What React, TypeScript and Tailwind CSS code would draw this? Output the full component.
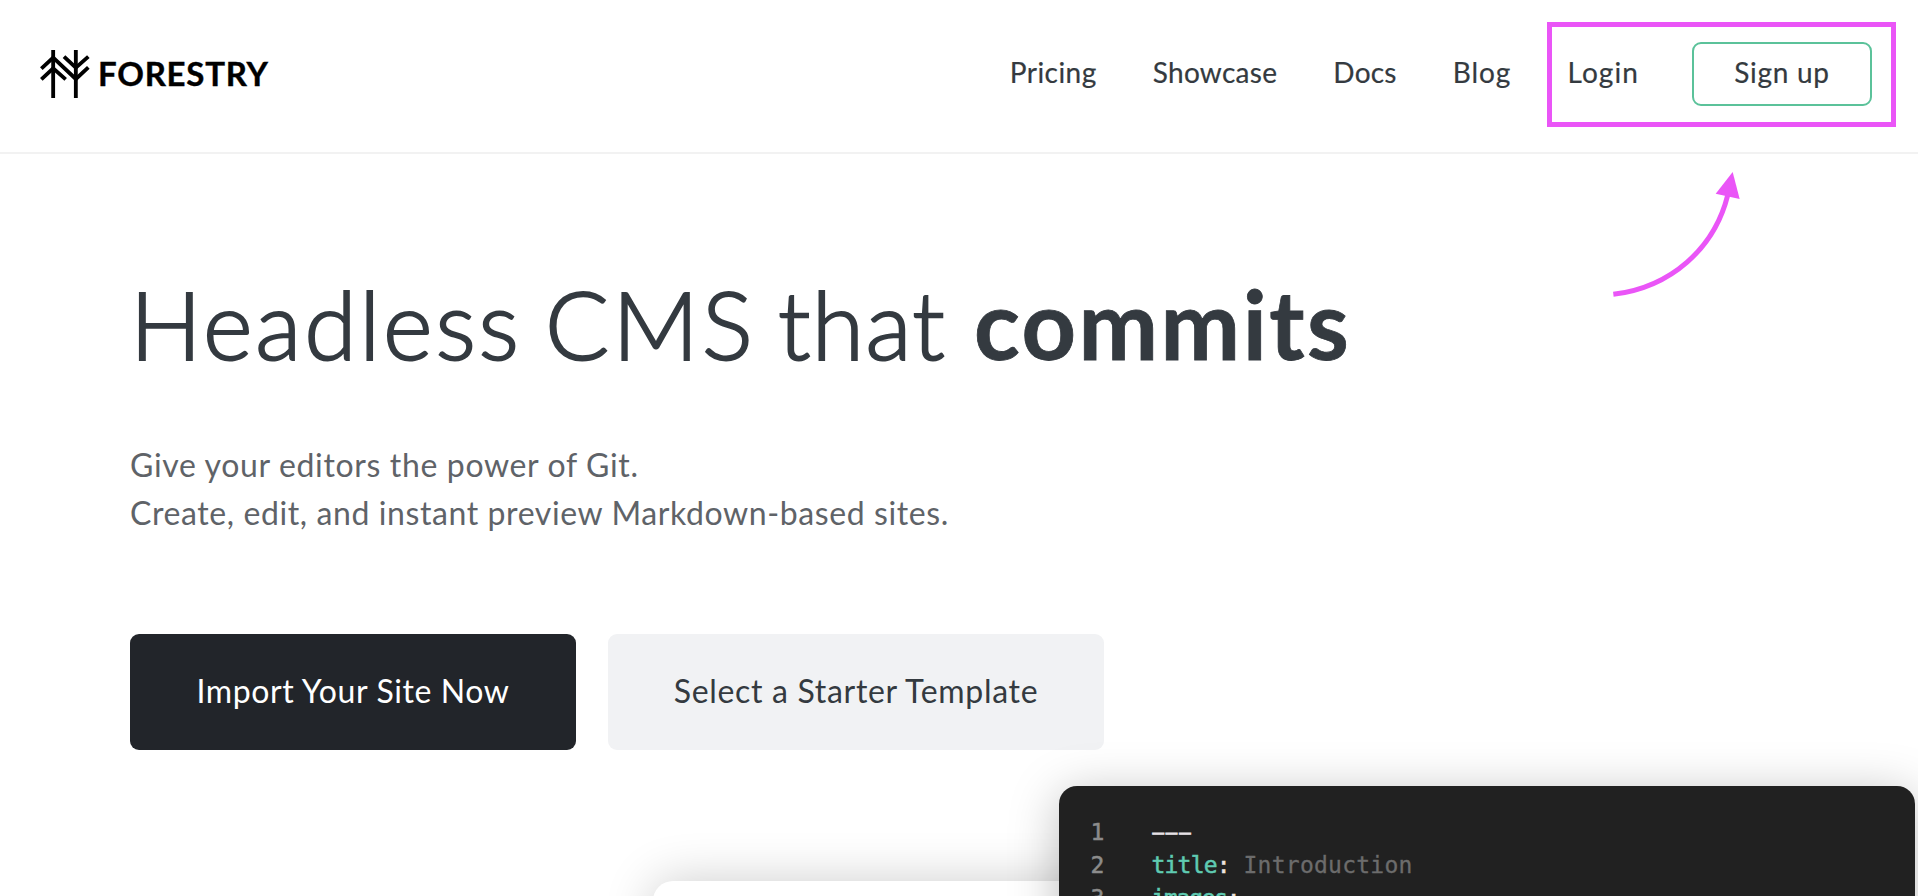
import React from "react";

const PINK = "#ea55f7";

function TreesMark() {
  return (
    <svg viewBox="60 60 150 144" className="h-12 w-[50px] shrink-0" fill="none" stroke="#000" strokeWidth="11.5">
      <path d="M99.5 60V204M167.5 60V204" />
      <path d="M64 116L99.5 83L167.5 147L205 112" />
      <path d="M64 148L99.5 115L137 148" />
      <path d="M132 80L167.5 113L205 80" />
    </svg>
  );
}

function Header() {
  return (
    <header className="flex h-[154px] items-start justify-between border-b-2 border-[#f2f2f2] pr-[46px] pl-10">
      <a className="flex items-start gap-2 pt-[50px]">
        <TreesMark />
        <span className="pt-[5px] text-[33px] leading-9 font-bold tracking-[0.75px] text-black [-webkit-text-stroke:0.4px_#000]">
          FORESTRY
        </span>
      </a>
      <nav className="flex items-start gap-14 pt-[42px] text-[28px] leading-9 text-[#343a40]">
        <a className="pt-3 tracking-[0.45px] [-webkit-text-stroke:0.2px_#343a40]">Pricing</a>
        <a className="pt-3 tracking-[0.3px] [-webkit-text-stroke:0.2px_#343a40]">Showcase</a>
        <a className="pt-3 tracking-[0.2px] [-webkit-text-stroke:0.2px_#343a40]">Docs</a>
        <a className="pt-3 tracking-[1px] [-webkit-text-stroke:0.2px_#343a40]">Blog</a>
        <a className="-mr-[3px] pt-3 tracking-[1.1px] [-webkit-text-stroke:0.2px_#343a40]">Login</a>
        <a className="h-16 w-[180px] rounded-[9px] border-2 border-[#5bc29a] pt-2.5 text-center tracking-[0.7px] [-webkit-text-stroke:0.2px_#343a40]">
          Sign up
        </a>
      </nav>
    </header>
  );
}

function Hero() {
  return (
    <section className="pt-[121px] pl-[130px]">
      <h1 className="flex text-[95px] leading-24 font-light whitespace-nowrap text-[#343a40]">
        <span className="w-[415px] tracking-[2.8px] [-webkit-text-stroke:2px_#343a40]">Headless</span>
        <span className="w-[233px] tracking-[3.2px] [-webkit-text-stroke:2px_#343a40]">CMS</span>
        <span className="w-[196px] tracking-[1.3px] [-webkit-text-stroke:2px_#343a40]">that</span>
        <b className="font-bold tracking-[2.5px] [-webkit-text-stroke:0.8px_#343a40]">commits</b>
      </h1>
      <p className="mt-[70px] text-[32px] leading-12 text-[#5f6368]">
        <span className="tracking-[0.65px]">Give your editors the power of Git.</span>
        <br />
        <span className="tracking-[0.6px]">Create, edit, and instant preview Markdown-based sites.</span>
      </p>
      <div className="mt-[97px] flex gap-8 text-[32px]">
        <a className="flex h-[116px] w-[446px] items-center justify-center rounded-[9px] bg-[#22252a] pb-0.5 tracking-[0.6px] text-white">
          Import Your Site Now
        </a>
        <a className="flex h-[116px] w-[496px] items-center justify-center rounded-[9px] bg-[#f1f2f4] pb-0.5 tracking-[0.68px] text-[#343a40]">
          Select a Starter Template
        </a>
      </div>
    </section>
  );
}

function CodeLine({ n, children }: { n: number; children: React.ReactNode }) {
  return (
    <div className="flex h-[33px] whitespace-pre">
      <span className="w-[61px] text-[#8c8c8c] [-webkit-text-stroke:0.5px_#8c8c8c]">{n}</span>
      {children}
    </div>
  );
}

function Preview() {
  return (
    <section className="grid h-[146px]">
      <div className="col-start-1 row-start-1 mt-[131px] ml-[653px] h-[300px] w-[900px] rounded-[20px] bg-white shadow-[0_0_50px_rgba(0,0,0,0.2)]" />
      <div className="col-start-1 row-start-1 mt-9 ml-[1058.5px] h-[400px] w-[856.5px] rounded-[18px] bg-[#212121] pt-[30px] pl-8 font-['DejaVu_Sans_Mono',monospace] text-[23px] leading-[33px] shadow-[0_8px_50px_rgba(0,0,0,0.26)]">
        <CodeLine n={1}>
          <span className="pl-px text-[19px] tracking-[1.9px] text-[#e6e1e6] [-webkit-text-stroke:0.9px_#e6e1e6]">–––</span>
        </CodeLine>
        <CodeLine n={2}>
          <span className="w-[92px] tracking-[-0.8px] text-[#5fcbb2] [-webkit-text-stroke:0.5px_#5fcbb2]">
            title<span className="text-[#ece6df] [-webkit-text-stroke:0.5px_#ece6df]">:</span>
          </span>
          <span className="tracking-[0.25px] text-[#6c6c6c] [-webkit-text-stroke:0.3px_#6c6c6c]">Introduction</span>
        </CodeLine>
        <CodeLine n={3}>
          <span className="tracking-[-1.3px] text-[#5fcbb2] [-webkit-text-stroke:0.5px_#5fcbb2]">
            images<span className="text-[#ece6df] [-webkit-text-stroke:0.5px_#ece6df]">:</span>
          </span>
        </CodeLine>
      </div>
    </section>
  );
}

function Annotation() {
  return (
    <>
      <div className="absolute top-[22px] left-[1547px] h-[105px] w-[349px] border-[5px] border-[#ea55f7]" />
      <svg viewBox="280 480 396 390" className="absolute top-[170px] left-[1611.33px] h-[130px] w-[132px]" fill="none">
        <path d="M287 853C460 832 590 715 630 556" stroke={PINK} strokeWidth="15" />
        <path d="M645 486L594 551L666 567Z" fill={PINK} />
      </svg>
    </>
  );
}

export default function App() {
  return (
    <div className="relative h-[896px] w-[1918px] overflow-hidden bg-white font-['Lato',sans-serif]">
      <Header />
      <Hero />
      <Preview />
      <Annotation />
    </div>
  );
}
